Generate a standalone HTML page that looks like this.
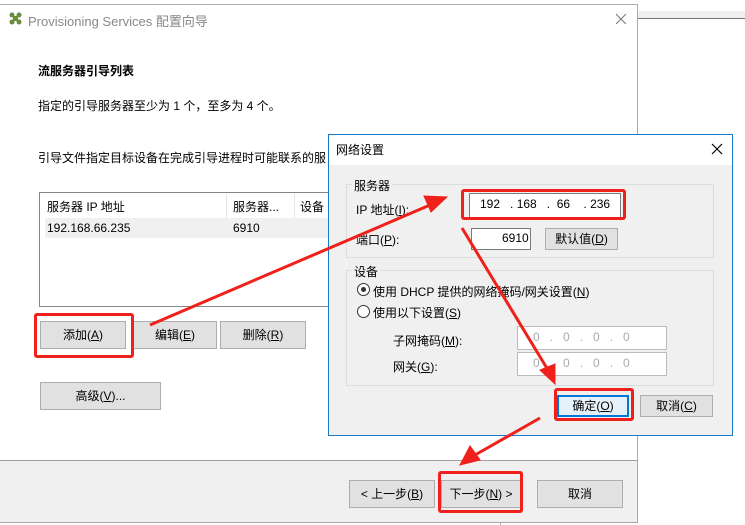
<!DOCTYPE html><html><head><meta charset="utf-8"><style>
*{box-sizing:border-box;margin:0;padding:0}
body{width:745px;height:525px;background:#fff;position:relative;overflow:hidden;font-family:"Liberation Sans","Noto Sans CJK SC",sans-serif;font-size:12px;color:#000}
.a{position:absolute}
.btn{position:absolute;background:#e1e1e1;border:1px solid #adadad;text-align:center;font-size:12px}
.red{position:absolute;border:3px solid #f0201a;border-radius:3px}
.in{position:absolute;background:#fff;border:1px solid #7a7a7a}
.grp{position:absolute;border:1px solid #dcdcdc}
.rad{position:absolute;width:13px;height:13px;border:1px solid #333;border-radius:50%;background:#fff}
</style></head><body>
<div class="a" style="left:637px;top:11px;width:108px;height:8px;background:#efefef;border-bottom:1px solid #777"></div>
<div class="a" style="left:0;top:4px;width:638px;height:519px;border:1px solid #aaa;border-left:none;background:#fff"></div>
<div class="a" style="left:500px;top:522px;width:1px;height:3px;background:#aaa"></div>
<svg class="a" style="left:9px;top:12px" width="13" height="13"><g fill="#6a8c3a"><circle cx="3" cy="3" r="2.5"/><circle cx="10" cy="3" r="2.5"/><circle cx="3" cy="10" r="2.5"/><circle cx="10" cy="10" r="2.5"/><rect x="4" y="4" width="5" height="5"/></g></svg>
<div class="a" style="left:28px;top:11px;font-size:13px;color:#888">Provisioning Services 配置向导</div>
<svg class="a" style="left:615px;top:13px" width="12" height="12"><path d="M1 1L11 11M11 1L1 11" stroke="#777" stroke-width="1"/></svg>
<div class="a" style="left:38px;top:62px;font-weight:bold">流服务器引导列表</div>
<div class="a" style="left:38px;top:97px">指定的引导服务器至少为 1 个，至多为 4 个。</div>
<div class="a" style="left:38px;top:149px">引导文件指定目标设备在完成引导进程时可能联系的服</div>
<div class="a" style="left:39px;top:192px;width:300px;height:115px;border:1px solid #828790;background:#fff"></div>
<div class="a" style="left:47px;top:198px">服务器 IP 地址</div>
<div class="a" style="left:226px;top:194px;width:1px;height:24px;background:#e5e5e5"></div>
<div class="a" style="left:233px;top:198px">服务器...</div>
<div class="a" style="left:294px;top:194px;width:1px;height:24px;background:#e5e5e5"></div>
<div class="a" style="left:300px;top:198px">设备</div>
<div class="a" style="left:45px;top:218px;width:283px;height:20px;background:#f0f0f0"></div>
<div class="a" style="left:47px;top:221px">192.168.66.235</div>
<div class="a" style="left:233px;top:221px">6910</div>
<div class="btn" style="left:40px;top:321px;width:86px;height:28px;line-height:26px">添加(<u>A</u>)</div>
<div class="btn" style="left:133px;top:321px;width:84px;height:28px;line-height:26px">编辑(<u>E</u>)</div>
<div class="btn" style="left:220px;top:321px;width:86px;height:28px;line-height:26px">删除(<u>R</u>)</div>
<div class="red" style="left:34px;top:313px;width:100px;height:45px"></div>
<div class="btn" style="left:40px;top:382px;width:121px;height:28px;line-height:26px">高级(<u>V</u>)...</div>
<div class="a" style="left:0;top:460px;width:637px;height:62px;background:#f0f0f0;border-top:1px solid #a0a0a0"></div>
<div class="btn" style="left:349px;top:480px;width:86px;height:28px;line-height:26px">&lt; 上一步(<u>B</u>)</div>
<div class="btn" style="left:441px;top:480px;width:80px;height:28px;line-height:26px">下一步(<u>N</u>) &gt;</div>
<div class="btn" style="left:537px;top:480px;width:86px;height:28px;line-height:26px">取消</div>
<div class="red" style="left:438px;top:471px;width:85px;height:42px"></div>

<div class="a" style="left:328px;top:134px;width:405px;height:302px;border:1px solid #1979ca;background:#f0f0f0"></div>
<div class="a" style="left:329px;top:135px;width:403px;height:30px;background:#fff"></div>
<div class="a" style="left:336px;top:141px">网络设置</div>
<svg class="a" style="left:711px;top:143px" width="12" height="12"><path d="M1 1L11 11M11 1L1 11" stroke="#000" stroke-width="1.2"/></svg>
<div class="grp" style="left:346px;top:184px;width:368px;height:74px"></div>
<div class="a" style="left:352px;top:177px;background:#f0f0f0;padding:0 2px">服务器</div>
<div class="a" style="left:356px;top:201px">IP 地址(<u>I</u>):</div>
<div class="in" style="left:469px;top:193px;width:152px;height:25px"></div>
<div class="a" style="left:480px;top:197px">192&nbsp;&nbsp;&nbsp;.&nbsp;168&nbsp;&nbsp;&nbsp;.&nbsp;&nbsp;66&nbsp;&nbsp;&nbsp;&nbsp;.&nbsp;236</div>
<div class="red" style="left:461px;top:189px;width:165px;height:31px"></div>
<div class="a" style="left:356px;top:231px">端口(<u>P</u>):</div>
<div class="in" style="left:471px;top:228px;width:60px;height:22px"></div>
<div class="a" style="left:502px;top:231px">6910</div>
<div class="btn" style="left:545px;top:228px;width:73px;height:22px;line-height:20px">默认值(<u>D</u>)</div>
<div class="grp" style="left:346px;top:270px;width:368px;height:116px"></div>
<div class="a" style="left:352px;top:263px;background:#f0f0f0;padding:0 2px">设备</div>
<div class="rad" style="left:357px;top:283px"></div><div class="a" style="left:361px;top:287px;width:5px;height:5px;border-radius:50%;background:#333"></div>
<div class="a" style="left:373px;top:283px">使用 DHCP 提供的网络掩码/网关设置(<u>N</u>)</div>
<div class="rad" style="left:357px;top:305px"></div>
<div class="a" style="left:373px;top:304px">使用以下设置(<u>S</u>)</div>
<div class="a" style="left:393px;top:332px">子网掩码(<u>M</u>):</div>
<div class="in" style="left:517px;top:326px;width:150px;height:24px;border-color:#bbb"></div>
<div class="a" style="left:533px;top:330px;color:#aaa">0&nbsp;&nbsp;&nbsp;.&nbsp;&nbsp;&nbsp;0&nbsp;&nbsp;&nbsp;.&nbsp;&nbsp;&nbsp;0&nbsp;&nbsp;&nbsp;.&nbsp;&nbsp;&nbsp;0</div>
<div class="a" style="left:393px;top:358px">网关(<u>G</u>):</div>
<div class="in" style="left:517px;top:352px;width:150px;height:24px;border-color:#bbb"></div>
<div class="a" style="left:533px;top:356px;color:#aaa">0&nbsp;&nbsp;&nbsp;.&nbsp;&nbsp;&nbsp;0&nbsp;&nbsp;&nbsp;.&nbsp;&nbsp;&nbsp;0&nbsp;&nbsp;&nbsp;.&nbsp;&nbsp;&nbsp;0</div>
<div class="btn" style="left:557px;top:395px;width:72px;height:22px;line-height:19px;border:2px solid #0078d7;background:#e5f1fb">确定(<u>O</u>)</div>
<div class="btn" style="left:640px;top:395px;width:73px;height:22px;line-height:20px">取消(<u>C</u>)</div>
<div class="red" style="left:554px;top:388px;width:80px;height:33px"></div>

<svg class="a" style="left:0;top:0" width="745" height="525">
<g stroke="#f0201a" stroke-width="3" fill="#f0201a">
<line x1="150" y1="325" x2="430" y2="205"/>
<polygon points="447,197 424,196 431,212" stroke-width="1"/>
<line x1="462" y1="228" x2="548" y2="370"/>
<polygon points="555,384 540,370 555,364" stroke-width="1"/>
<line x1="540" y1="418" x2="475" y2="455"/>
<polygon points="460,465 470,446 480,460" stroke-width="1"/>
</g></svg>
</body></html>
